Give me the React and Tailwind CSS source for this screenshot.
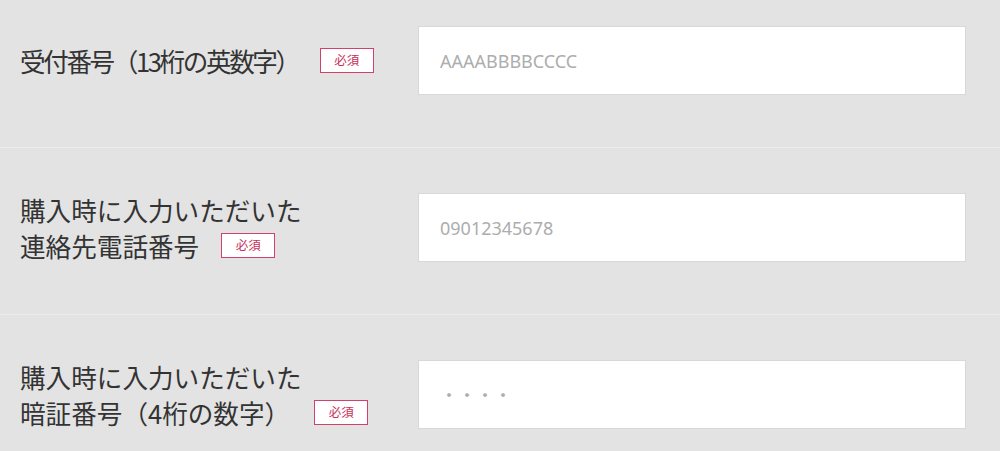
import React from 'react';

const rows = [
  { lines: ['受付番号（13桁の英数字）'], placeholder: 'AAAABBBBCCCC', tight: true, gap: 'ml-[21px]' },
  { lines: ['購入時に入力いただいた', '連絡先電話番号'], placeholder: '09012345678', gap: 'ml-[22px]' },
  { lines: ['購入時に入力いただいた', '暗証番号（4桁の数字）'], placeholder: '・・・・', gap: 'ml-[24px]' },
];

function Badge({ gap }) {
  return (
    <span className={`inline-flex items-center justify-center shrink-0 w-[54px] h-[25px] ${gap} border border-[#d2416c] bg-white text-[12.5px] leading-none tracking-normal text-[#c8305a]`}>
      必須
    </span>
  );
}

export default function App() {
  return (
    <div className="w-[1000px] h-[451px] overflow-hidden bg-[#e3e3e3] font-['Noto_Sans_CJK_JP',sans-serif]">
      <div className="-mt-[19px]">
        {rows.map((row, i) => (
          <div key={i} className="pt-[45px] pb-[52px] border-b border-[#ececec]">
            <div className="flex items-center h-[69px]">
              <div className="w-[418px] pl-[20px] text-[25.6px] leading-[36px] text-[#333333]">
                {row.lines.map((line, j) => (
                  <div key={j} className="flex items-center whitespace-nowrap">
                    <span className={row.tight ? 'tracking-[-2.4px]' : ''}>{line}</span>
                    {j === row.lines.length - 1 && <Badge gap={row.gap} />}
                  </div>
                ))}
              </div>
              <input
                type="text"
                placeholder={row.placeholder}
                className="w-[548px] h-[69px] px-[21px] bg-white border border-[#d8d8d8] text-[18px] text-[#333] placeholder:text-[#adadad] outline-none font-['Noto_Sans','Noto_Sans_CJK_JP',sans-serif]"
              />
            </div>
          </div>
        ))}
      </div>
    </div>
  );
}
